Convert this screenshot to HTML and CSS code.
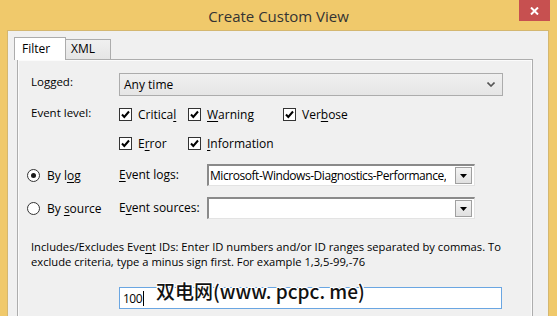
FILE: index.html
```html
<!DOCTYPE html>
<html lang="en">
<head>
  <meta charset="UTF-8" />
  <title>Create Custom View</title>
  <link rel="stylesheet" href="styles.css">
</head>
<body>

  <div class="titlebar">
    <span></span>
    <div class="title">Create Custom View</div>
    <div class="close-btn">
      <svg width="9" height="8" viewBox="0 0 9 8"><path d="M1 0.5 L8 7.5 M8 0.5 L1 7.5" stroke="#fff" stroke-width="2"/></svg>
    </div>
  </div>

  <div class="client">
    <div class="tabs">
      <div class="tab tab-active">Filter</div>
      <div class="tab">XML</div>
    </div>

    <div class="panel">
      <div class="row row-logged">
        <div class="label">Logged:</div>
        <div class="select">
          <span>Any time</span>
          <svg class="chevron" width="8" height="5" viewBox="0 0 8 5"><path d="M0.5 0.5 L4 4 L7.5 0.5" fill="none" stroke="#555" stroke-width="1.6"/></svg>
        </div>
      </div>

      <div class="row row-level">
        <div class="label">Event level:</div>
        <div class="levels">
          <div class="check-item"><span class="checkbox"></span><span>Critica<u>l</u></span></div>
          <div class="check-item"><span class="checkbox"></span><span><u>W</u>arning</span></div>
          <div class="check-item"><span class="checkbox"></span><span>Ver<u>b</u>ose</span></div>
          <div class="check-item"><span class="checkbox"></span><span>E<u>r</u>ror</span></div>
          <div class="check-item"><span class="checkbox"></span><span><u>I</u>nformation</span></div>
        </div>
      </div>

      <div class="row row-source">
        <div class="radio-item"><span class="radio radio-on"></span><span>By l<u>o</u>g</span></div>
        <div class="label"><u>E</u>vent logs:</div>
        <div class="combo">
          <span class="combo-text">Microsoft-Windows-Diagnostics-Performance,</span>
          <span class="drop-btn"><svg width="7" height="4" viewBox="0 0 7 4"><path d="M0 0 H7 L3.5 4 Z" fill="#000"/></svg></span>
        </div>
      </div>

      <div class="row row-source">
        <div class="radio-item"><span class="radio"></span><span>By <u>s</u>ource</span></div>
        <div class="label">E<u>v</u>ent sources:</div>
        <div class="combo">
          <span class="combo-text"></span>
          <span class="drop-btn"><svg width="7" height="4" viewBox="0 0 7 4"><path d="M0 0 H7 L3.5 4 Z" fill="#000"/></svg></span>
        </div>
      </div>

      <p class="hint">Includes/Excludes Eve<u>n</u>t IDs: Enter ID numbers and/or ID ranges separated by commas. To<br>exclude criteria, type a minus sign first. For example 1,3,5-99,-76</p>

      <div class="row row-ids">
        <div class="ids-input">100<span class="caret"></span></div>
      </div>
    </div>
  </div>

  <div class="watermark">双电网(www. pcpc. me)</div>

</body>
</html>
```

FILE: styles.css
```css
* { margin: 0; padding: 0; box-sizing: border-box; }

body {
  width: 557px;
  height: 316px;
  overflow: hidden;
  position: relative;
  background: #f0c96b;
  font-family: 'Open Sans', 'Noto Sans', sans-serif;
  font-size: 11.5px;
  color: #000;
}

u {
  text-decoration: underline;
  text-underline-offset: 2px;
}

.titlebar {
  display: grid;
  grid-template-columns: 1fr auto 1fr;
  height: 30px;
}

.title {
  font-size: 15px;
  line-height: 30px;
  padding-top: 1px;
  color: #333;
}

.close-btn {
  justify-self: end;
  width: 31px;
  height: 21px;
  margin-right: 7px;
  background: #c75050;
  display: flex;
  align-items: center;
  justify-content: center;
}

.client {
  margin: 0 8px 0 7px;
  height: 290px;
  padding: 6px 15px 0 9px;
  background: #f0f0f0;
  border: 1px solid #d4b770;
  border-bottom: none;
}

.tabs {
  display: flex;
  align-items: flex-end;
  margin-left: -3px;
  margin-bottom: -1px;
  position: relative;
  z-index: 1;
}

.tab {
  height: 20px;
  width: 46px;
  margin-bottom: 1px;
  padding-left: 5px;
  border: 1px solid #acacac;
  border-bottom: none;
  margin-left: -1px;
  background: linear-gradient(#f0f0f0, #e5e5e5);
  line-height: 18px;
  font-size: 12px;
}

.tab-active {
  height: 23px;
  width: 52px;
  margin-left: 0;
  margin-bottom: 0;
  padding-left: 7px;
  background: #fff;
  line-height: 21px;
}

.panel {
  height: 260px;
  padding: 13px 0 0 13px;
  border: 1px solid #adadad;
  box-shadow: inset 0 0 0 1px #fbfbfb;
  background: #f0f0f0;
}

.row {
  display: flex;
  align-items: flex-start;
}

.label {
  width: 88px;
  line-height: 16px;
}

.row-logged .label {
  padding-top: 1px;
}

.select {
  width: 384px;
  height: 23px;
  padding: 0 7px 0 4px;
  border: 1px solid #acacac;
  background: linear-gradient(#f0f0f0, #e5e5e5);
  display: flex;
  align-items: center;
  justify-content: space-between;
  font-size: 12px;
}

.row-level {
  margin-top: 9px;
}

.levels {
  display: grid;
  grid-template-columns: 69px 95px 100px;
  row-gap: 9px;
  margin-top: -1px;
}

.check-item {
  height: 20px;
  display: flex;
  align-items: center;
  gap: 6px;
  font-size: 12px;
  white-space: nowrap;
}

.check-item:nth-child(4) {
  grid-column: 1;
}

.checkbox {
  flex: none;
  width: 13px;
  height: 13px;
  border: 1px solid #333;
  background: #fff url("data:image/svg+xml,%3Csvg xmlns='http://www.w3.org/2000/svg' width='11' height='11' viewBox='0 0 11 11'%3E%3Cpath d='M2 5.5 L4.3 8 L9 2.5' fill='none' stroke='%23000' stroke-width='2'/%3E%3C/svg%3E") center no-repeat;
}

.row-source {
  margin-top: 11px;
  margin-left: -4px;
  align-items: center;
  height: 22px;
}

.radio-item {
  width: 92px;
  display: flex;
  align-items: center;
  gap: 7px;
  font-size: 12px;
  white-space: nowrap;
}

.radio {
  flex: none;
  width: 13px;
  height: 13px;
  border: 1px solid #333;
  border-radius: 50%;
  background: #fff;
  display: flex;
  align-items: center;
  justify-content: center;
}

.radio-on::after {
  content: "";
  width: 5px;
  height: 5px;
  border-radius: 50%;
  background: #1a1a1a;
}

.row-source .label {
  font-size: 12px;
}

.combo {
  width: 268px;
  height: 22px;
  display: flex;
  align-items: center;
  justify-content: space-between;
  padding: 0 2px 0 1px;
  background: #fff;
  border-top: 2px solid #8a8a8a;
  border-left: 2px solid #8a8a8a;
  border-right: 1px solid #e3e3e3;
  border-bottom: 1px solid #e3e3e3;
  overflow: hidden;
}

.combo-text {
  font-size: 12px;
  white-space: nowrap;
  overflow: hidden;
  letter-spacing: -0.45px;
}

.drop-btn {
  flex: none;
  width: 17px;
  height: 17px;
  border: 1px solid #a0a0a0;
  background: linear-gradient(#f4f4f4, #e0e0e0);
  display: flex;
  align-items: center;
  justify-content: center;
}

.hint {
  margin-top: 20px;
  line-height: 15px;
  font-size: 11.2px;
  white-space: nowrap;
}

.row-ids {
  margin-top: 18px;
}

.ids-input {
  margin-left: 88px;
  width: 383px;
  height: 22px;
  padding-left: 3px;
  border: 1px solid #6aa6e2;
  background: #fff;
  display: flex;
  align-items: center;
  font-size: 12px;
  letter-spacing: -0.5px;
}

.caret {
  width: 1px;
  height: 15px;
  background: #000;
  margin-left: 1px;
}

.watermark {
  position: absolute;
  left: 156px;
  top: 278px;
  font-family: 'Noto Sans CJK SC', sans-serif;
  font-size: 19px;
  font-weight: 500;
  line-height: 26px;
  color: #111;
  text-shadow: 1px 0 #fff, -1px 0 #fff, 0 1px #fff, 0 -1px #fff, 1px 1px #fff, -1px -1px #fff, 1px -1px #fff, -1px 1px #fff;
  white-space: nowrap;
}
```
